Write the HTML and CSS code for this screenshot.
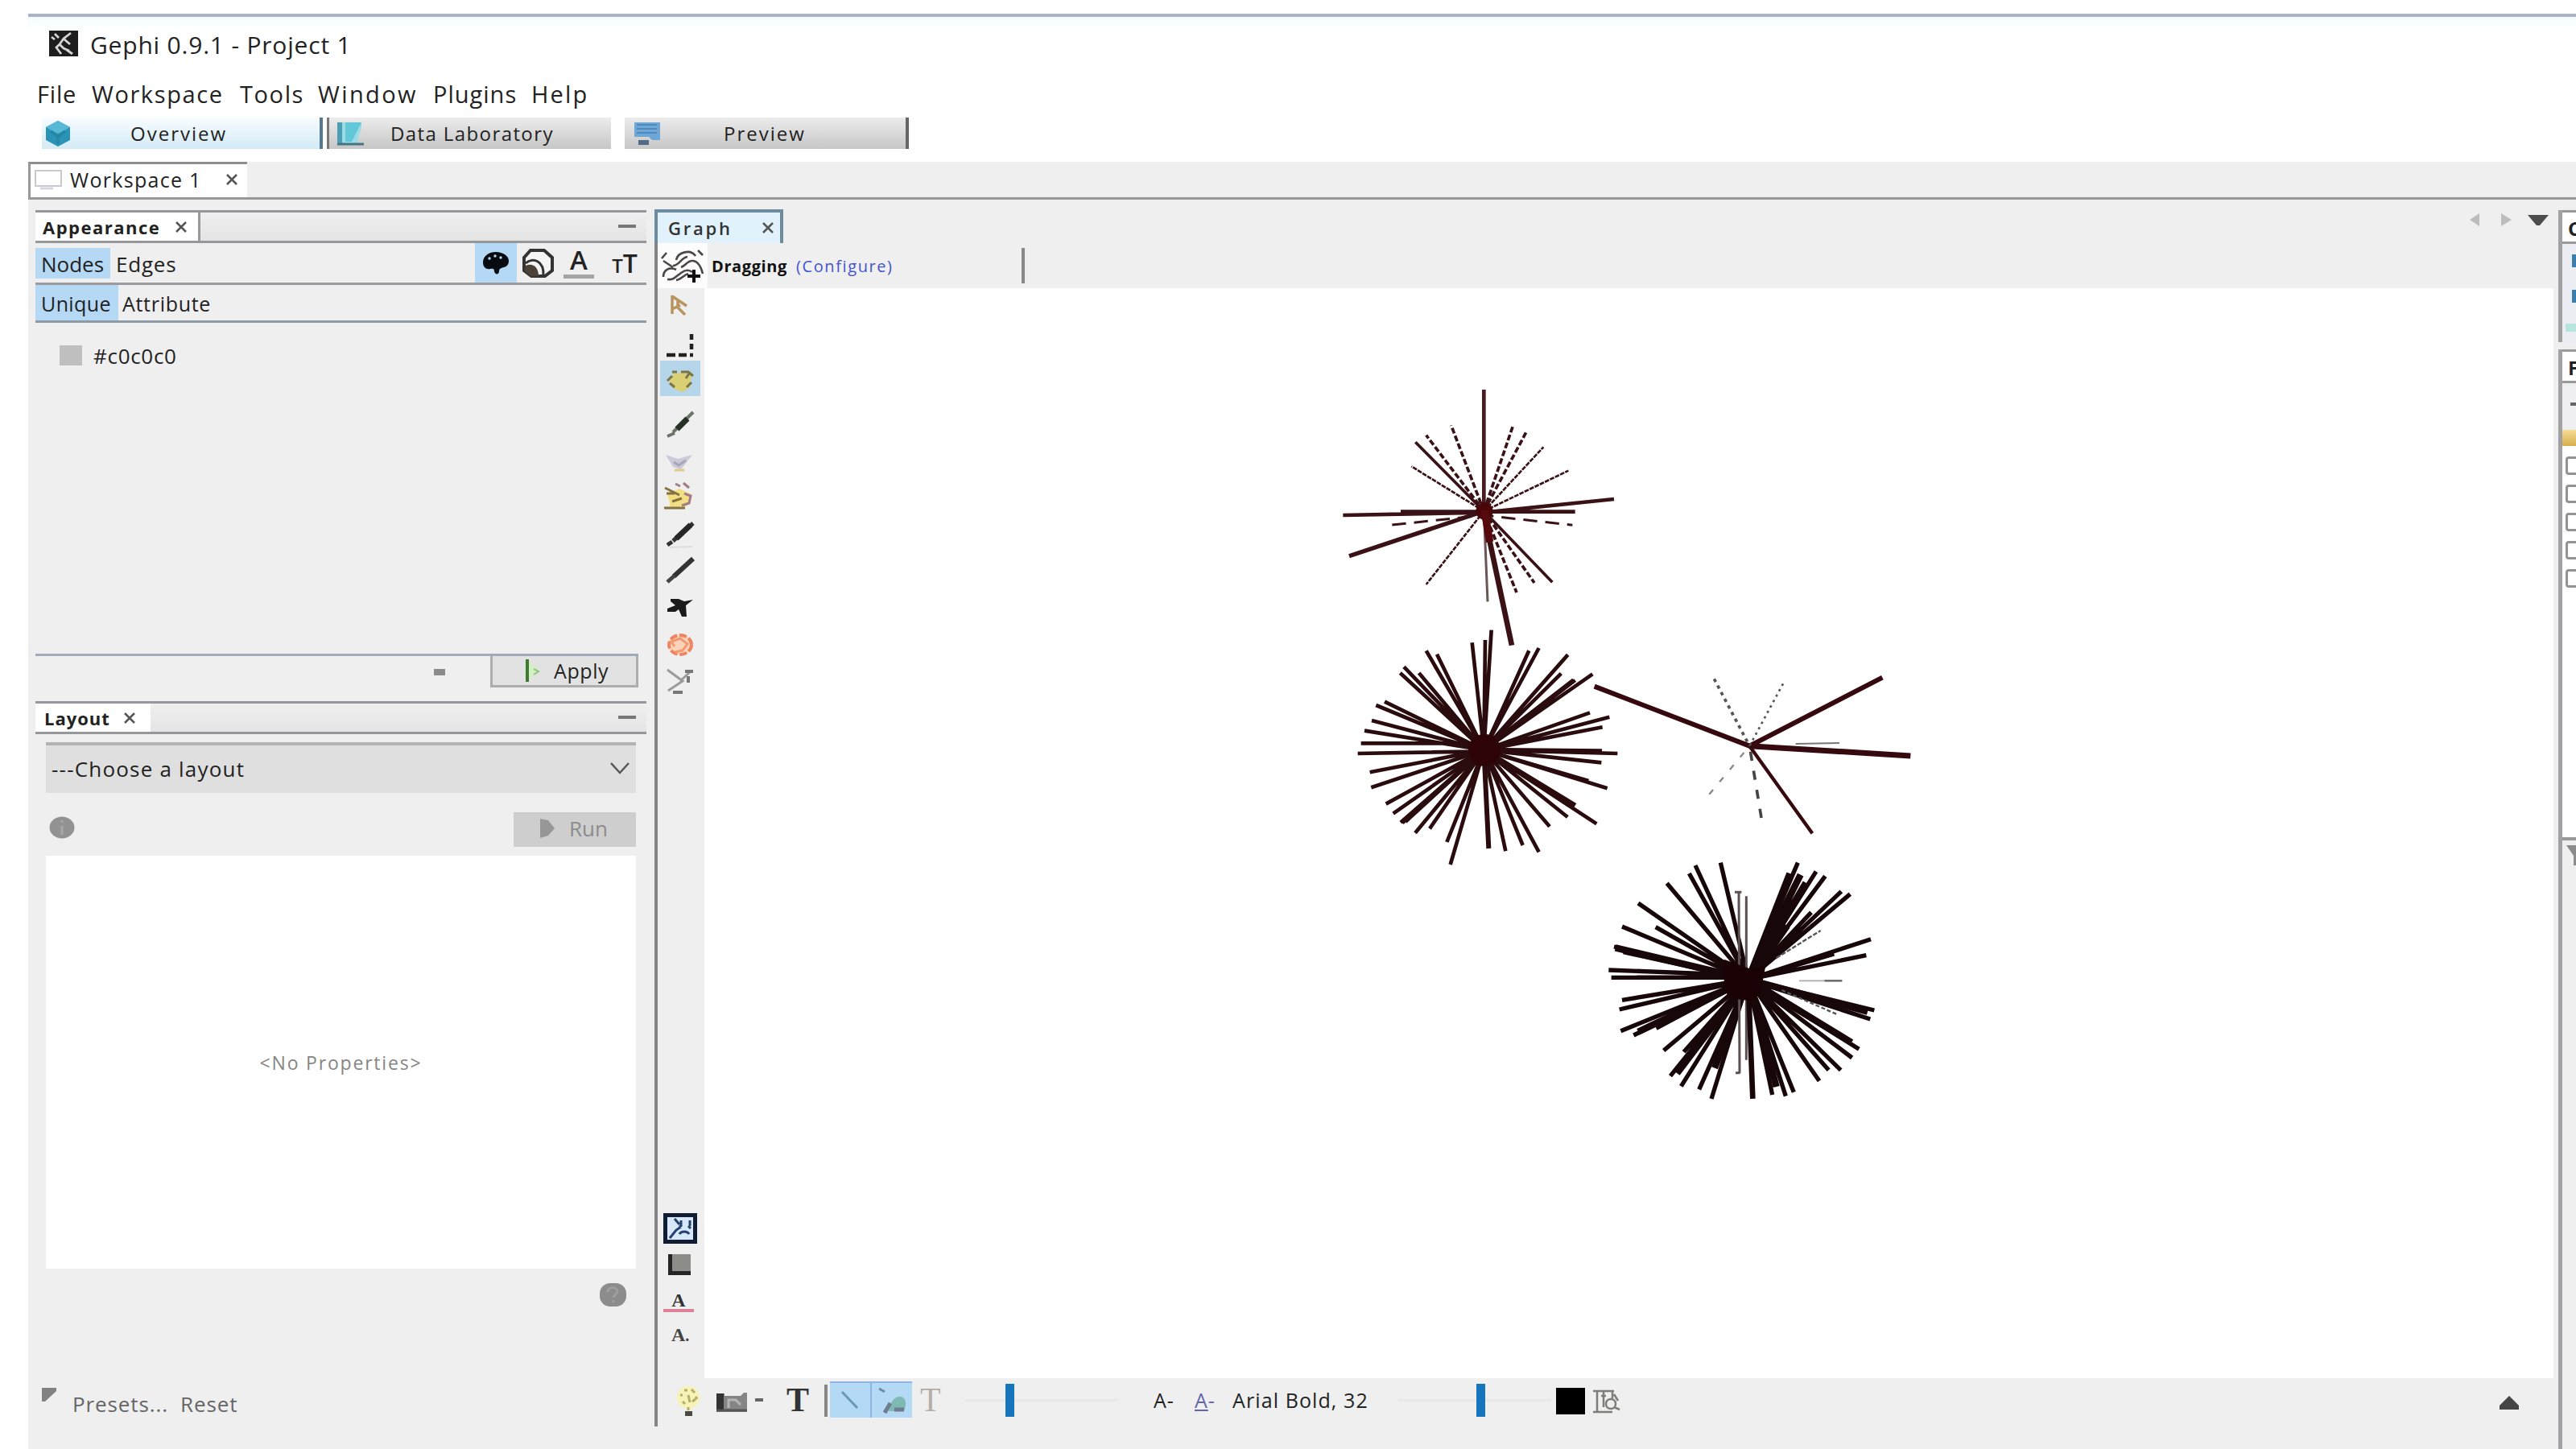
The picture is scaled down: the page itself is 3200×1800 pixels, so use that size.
FILE: index.html
```html
<!DOCTYPE html>
<html lang="en">
<head>
<meta charset="utf-8">
<title>Gephi 0.9.1 - Project 1</title>
<link rel="stylesheet" href="styles.css">
</head>
<body>
<div class="window">
  <header class="titlebar">
    <svg class="app-icon" width="36" height="32" viewBox="0 0 36 32"><rect width="36" height="32" fill="#1d1d1d"/><path d="M7 4l5 5M27 3l-9 7-5 7 5 5 7 3M19 11l7 6M13 17l-4 4 6 8M22 24l7 5M3 8l4 3" fill="none" stroke="#d6d6d6" stroke-width="2.800"/></svg>
    <span class="app-title">Gephi 0.9.1 - Project 1</span>
  </header>
  <nav class="menubar">
    <span class="m-file">File</span><span class="m-workspace">Workspace</span><span class="m-tools">Tools</span><span class="m-window">Window</span><span class="m-plugins">Plugins</span><span class="m-help">Help</span>
  </nav>
  <div class="perspectives">
    <div class="persp active">
      <svg width="36" height="34" viewBox="0 0 36 34"><path d="M18 1l15 8v16l-15 8-15-8V9z" fill="#2b93b5"/><path d="M18 1l15 8-15 8-15-8z" fill="#58b9d6"/><path d="M9 14l9 7 9-7M18 21v9" stroke="#2585a6" stroke-width="3" fill="none"/></svg>
      <span class="p-overview">Overview</span>
    </div>
    <div class="persp data">
      <svg width="36" height="32" viewBox="0 0 36 32"><path d="M2 2h30v6l-6 22H2z" fill="#9adbe4"/><path d="M2 2h6v28H2z" fill="#4a9fb4"/><path d="M12 2h20l-12 24h-8z" fill="#62c8d9"/><path d="M2 29h33" stroke="#447786" stroke-width="3"/></svg>
      <span class="p-data">Data Laboratory</span>
    </div>
    <div class="persp preview">
      <svg width="34" height="32" viewBox="0 0 34 32"><path d="M1 2h32v22H23l-4-4H1z" fill="#6ea6d6"/><path d="M4 5h25M4 10h25M4 15h25" stroke="#4f8abf" stroke-width="2"/><path d="M6 27h13" stroke="#536c83" stroke-width="6"/></svg>
      <span class="p-preview">Preview</span>
    </div>
  </div>
  <div class="workspace-bar">
    <div class="workspace-tab">
      <svg width="36" height="26" viewBox="0 0 36 26"><path d="M2 2h32v19H2z" fill="#fff" stroke="#c9c9d1" stroke-width="2"/><path d="M8 24h16" stroke="#d6d6e0" stroke-width="3"/></svg>
      <span class="ws-label">Workspace 1</span>
      <svg class="close" width="14" height="14" viewBox="0 0 14 14"><path d="M1 1l12 12M13 1L1 13"/></svg>
    </div>
  </div>

  <main class="main">
    <aside class="left">
      <div class="panel-head">
        <div class="panel-tab tab-appearance"><span>Appearance</span><svg class="close" width="14" height="14" viewBox="0 0 14 14"><path d="M1 1l12 12M13 1L1 13"/></svg></div>
        <i class="minimize"></i>
      </div>
      <div class="row nodes-row">
        <span class="choice c-nodes on">Nodes</span><span class="choice c-edges">Edges</span>
        <div class="looks">
          <span class="look on"><svg width="34" height="30" viewBox="0 0 34 30"><path d="M17 1C7 1 1 7 1 14c0 6 4 9 9 8 4-1 5 0 5 3 1 5 6 4 6 0 0-4 3-4 6-5 4-1 6-4 6-8C33 6 26 1 17 1z" fill="#080c10"/><g fill="#b9dcf5"><circle cx="9" cy="9" r="1.7"/><circle cx="16" cy="6" r="1.7"/><circle cx="23" cy="8" r="1.7"/></g></svg></span>
          <span class="look"><svg width="42" height="38" viewBox="0 0 42 38"><path d="M12 3h17l10 9v16l-9 7H13L4 28V12z" fill="#f4f4f4" stroke="#333" stroke-width="4"/><path d="M6 19c9-8 23-3 22 15" fill="none" stroke="#333" stroke-width="3"/><path d="M6 22c8-4 16 1 16 13H12L5 29z" fill="#4a4236"/></svg></span>
          <span class="look look-a">A</span>
          <span class="look look-t"><small>T</small>T</span>
        </div>
      </div>
      <div class="row unique-row"><span class="choice c-unique on">Unique</span><span class="choice c-attr">Attribute</span></div>
      <div class="appearance-body"><i class="swatch"></i><span>#c0c0c0</span></div>
      <div class="apply-row">
        <i class="dot"></i>
        <div class="btn apply"><svg width="20" height="28" viewBox="0 0 20 28"><path d="M3 2l15 12L3 26z" fill="#d4efc4"/><path d="M3 0v28" stroke="#3c7a2d" stroke-width="4"/><path d="M11 12l6 3-6 4" fill="none" stroke="#8fc67d" stroke-width="2"/></svg><span>Apply</span></div>
      </div>
      <div class="panel-head">
        <div class="panel-tab tab-layout"><span>Layout</span><svg class="close" width="14" height="14" viewBox="0 0 14 14"><path d="M1 1l12 12M13 1L1 13"/></svg></div>
        <i class="minimize"></i>
      </div>
      <div class="combo"><span>---Choose a layout</span><svg width="24" height="16" viewBox="0 0 24 16"><path d="M1 1l11 12L23 1" fill="none" stroke="#555" stroke-width="2.5"/></svg></div>
      <div class="run-row">
        <svg width="32" height="28" viewBox="0 0 32 28"><ellipse cx="16" cy="14" rx="15.500" ry="13.500" fill="#929292"/><path d="M16 5v3M16 12v11" stroke="#a8a8a8" stroke-width="3"/></svg>
        <div class="btn run"><svg width="20" height="26" viewBox="0 0 20 26"><path d="M1 1l10 2 8 10-8 9-10 3z" fill="#979797"/></svg><span>Run</span></div>
      </div>
      <div class="properties">&lt;No Properties&gt;</div>
      <div class="help-row"><svg width="33" height="29" viewBox="0 0 33 29"><rect width="33" height="29" rx="13" fill="#8c8c8c"/><path d="M10 11c0-7 12-7 12-1 0 4-5 4-5 8M17 21v3" fill="none" stroke="#9f9f9f" stroke-width="3"/></svg></div>
      <div class="presets"><svg width="18" height="17" viewBox="0 0 18 17"><path d="M0 0h18v4L4 17H0z" fill="#828282"/></svg><span class="pr-presets">Presets...</span><span class="pr-reset">Reset</span></div>
    </aside>

    <section class="graph">
      <div class="graph-head">
        <div class="graph-tab"><span>Graph</span><svg class="close" width="14" height="14" viewBox="0 0 14 14"><path d="M1 1l12 12M13 1L1 13"/></svg></div>
        <svg class="tab-nav" width="100" height="18" viewBox="0 0 100 18"><path d="M13 1v16L1 9zM40 1v16l13-8z" fill="#bdbdbd"/><path d="M73 3h26L88 16h-4z" fill="#4c4c4c"/></svg>
      </div>
      <div class="graph-opts">
        <div class="lasso"><svg width="56" height="44" viewBox="0 0 56 44"><path d="M2 13l6-7M4 16l12 8M20 15c2-10 18-14 24-5M16 22c8 0 10-10 18-11M26 24c6-2 8-9 15-8s10 8 12 16M4 36c0-9 8-13 16-9M9 39c8 1 10-3 17-8 5-4 10-4 14-1M20 40c6-1 9-6 15-8M47 3l6 6" fill="none" stroke="#4a4646" stroke-width="2.600"/><path d="M34 35h16M42 27v16" stroke="#111" stroke-width="4"/></svg></div>
        <b class="dragging">Dragging</b><span class="configure">(Configure)</span><i class="sep"></i>
      </div>
      <div class="graph-mid">
        <div class="tools">
          <svg class="t1" width="50" height="44" viewBox="0 0 50 44"><path d="M15 9v23M15 10l18 12M22 14v10l9 9M15 26l10-5" fill="none" stroke="#b8945f" stroke-width="3.500"/></svg>
          <svg class="t2" width="50" height="40" viewBox="0 0 50 40"><path d="M8 36h11M23 36h10M37 36h4M39 10v7M39 22v7" stroke="#222" stroke-width="4.500"/></svg>
          <svg class="t3" width="50" height="44" viewBox="0 0 50 44"><path d="M12 25l5-9 10-1 12 4-2 14-9 6-11-4z" fill="#d9cf74"/><path d="M9 25l6-6M15 14h6M26 14h9l6 5M12 28l6 5M33 33l6-6M36 16l-4 6" stroke="#7d7440" stroke-width="3" fill="none"/></svg>
          <svg class="t4" width="50" height="44" viewBox="0 0 50 44"><path d="M41 7L16 32M9 37l9-4" stroke="#6b7468" stroke-width="4"/><path d="M34 15L21 28" stroke="#283028" stroke-width="7"/></svg>
          <svg class="t5" width="50" height="44" viewBox="0 0 50 44"><path d="M7 12l15 5 18-5-14 18-10-3z" fill="#cccad8"/><path d="M17 21l6 4 9-6" stroke="#a7a5b8" stroke-width="3" fill="none"/><path d="M18 31h12" stroke="#dccb8a" stroke-width="3"/></svg>
          <svg class="t6" width="50" height="44" viewBox="0 0 50 44"><path d="M9 18l15-6 15 7-6 15-20 1z" fill="#f3df83"/><path d="M19 6l6 3M29 5l7 6M30 18l8 3-2 9-9 3" stroke="#a37d84" stroke-width="3" fill="none"/><path d="M6 11l18 9M8 18h10M5 36h26M15 28l12-4" stroke="#86713f" stroke-width="3" fill="none"/></svg>
          <svg class="t7" width="50" height="44" viewBox="0 0 50 44"><path d="M41 8L16 30M9 35l6-4" stroke="#333" stroke-width="5"/><path d="M38 10L20 27" stroke="#262626" stroke-width="7"/><path d="M12 38l28-1" stroke="#ddd" stroke-width="2"/></svg>
          <svg class="t8" width="50" height="44" viewBox="0 0 50 44"><path d="M41 7L17 29" stroke="#333" stroke-width="6"/><path d="M18 28L9 36" stroke="#444" stroke-width="5"/></svg>
          <svg class="t9" width="50" height="44" viewBox="0 0 50 44"><path d="M13 10h10l7 3 11-2-9 7 1 14h-6l-4-9-4 3H9v-4l10-4-6-5z" fill="#1b1b1b"/></svg>
          <svg class="t10" width="50" height="44" viewBox="0 0 50 44"><ellipse cx="25" cy="22" rx="15" ry="13" fill="#fbd3bb"/><ellipse cx="25" cy="22" rx="14" ry="12" fill="none" stroke="#ee8560" stroke-width="4" stroke-dasharray="9 3"/><path d="M18 24l-4-6 11-4 9 7-6 8-9 2" fill="none" stroke="#f09a72" stroke-width="3"/></svg>
          <svg class="t11" width="50" height="44" viewBox="0 0 50 44"><path d="M9 8l19 14-18 12M26 21l12-11" stroke="#9b9b9b" stroke-width="3" fill="none"/><path d="M31 10h10M35 16v8M16 36h12" stroke="#777" stroke-width="4" fill="none"/></svg>
          <div class="tools-bottom">
            <svg width="42" height="38" viewBox="0 0 42 38"><rect x="2.500" y="2.500" width="37" height="33" fill="#d8e8fb" stroke="#101c33" stroke-width="5"/><path d="M8 31l8-10 6-4M14 7l6 7M22 9v8M33 9v7M20 17l3-3M31 16l3 3M20 26c2-4 10-4 12 0" stroke="#23416f" stroke-width="3" fill="none"/></svg>
            <svg width="28" height="26" viewBox="0 0 28 26"><rect width="28" height="26" fill="#8d8d89"/><path d="M2.500 0v23.500H28" fill="none" stroke="#262626" stroke-width="5"/></svg>
            <span class="tool-a">A</span>
            <span class="tool-a2">A<small>.</small></span>
          </div>
        </div>
        <svg class="canvas" width="2297" height="1354" viewBox="0 0 2297 1354">
          <g transform="translate(765 102) scale(.33333)" stroke="#3a1216" fill="none">
            <path stroke="#4a1b20" stroke-width="14" d="M610 72V520"/>
            <path stroke-width="14" d="M85 540L610 530L1095 480M300 527L950 527"/>
            <path stroke-width="16" d="M108 692L610 525"/>
            <path stroke-width="20" d="M607 520L714 1025"/>
            <path stroke-width="8" stroke-dasharray="17 4" d="M610 525L832 286M610 525L925 374M610 525L340 358M610 525L395 798"/>
            <path stroke-width="9" stroke="#6b5557" d="M610 525L624 862"/>
            <path stroke-width="11" stroke-dasharray="22 9" d="M610 525L488 205M610 525L718 208M610 525L768 230M610 525L732 828M610 525L798 792M610 525L395 242"/>
            <path stroke-width="11" d="M610 525L355 268M610 525L865 790"/>
            <path stroke-width="9" stroke-dasharray="52 30" d="M268 576L610 540L940 577"/>
            <circle cx="612" cy="525" r="32" fill="#4a0508" stroke="none"/>
            <path stroke="#560a0d" stroke-width="28" d="M612 520L632 640"/>
          </g>
          <g transform="translate(765 402) scale(.33333)" stroke="#2a0c0e" fill="none" stroke-width="14">
            <path d="M610 515L638 68M610 515L615 105M610 515L566 115M610 515L395 145M610 515L435 158M610 515L312 205M610 515L298 228M610 515L368 228"/>
            <path d="M610 515L240 335M610 515L208 348M610 515L192 405M610 515L165 443M610 500L490 490L152 490M610 520L140 528M610 515L185 598M610 515L190 655"/>
            <path d="M610 515L245 716M610 515L272 752M610 515L300 785M610 515L318 782M610 515L354 824M610 515L408 808M610 515L472 858M610 515L485 942"/>
            <path stroke-width="18" d="M610 515L628 882M610 515L950 722M610 515L945 255M610 515L305 785M610 515L1050 520"/>
            <path d="M610 515L691 892M610 515L755 870M610 515L815 895M610 515L855 800M610 515L922 765M610 515L1030 790M610 515L1070 658M610 515L1000 630"/>
            <path d="M610 515L1048 562M610 515L1108 528M610 515L1052 430M610 515L1078 392M610 515L1005 376M610 515L1015 232M610 515L950 255M610 515L898 230M610 515L923 160M610 515L815 135M610 515L778 145"/>
            <circle cx="612" cy="515" r="60" fill="#2e0305" stroke="none"/>
          </g>
          <g transform="translate(1085 442) scale(.33333)" stroke="#35090d" fill="none">
            <path stroke-width="18" d="M62 158L640 380L1135 125"/>
            <path stroke-width="21" d="M640 380L1240 417"/>
            <path stroke-width="13" d="M640 380L874 706"/>
            <path stroke-width="11" stroke="#555" stroke-dasharray="13 15" d="M508 130L640 380"/>
            <path stroke-width="8" stroke="#555" stroke-dasharray="9 14" d="M765 148L640 380"/>
            <path stroke-width="11" stroke="#444" stroke-dasharray="34 38" d="M684 648L640 380"/>
            <path stroke-width="7" stroke="#888" stroke-dasharray="22 38" d="M490 560L640 380"/>
            <path stroke-width="6" stroke="#777" d="M812 372L975 369"/>
          </g>
          <g transform="translate(1085 682) scale(.33333)" stroke="#170708" fill="none" stroke-width="16">
            <path d="M635 530L532 95M635 530L438 105M635 530L415 135M635 530L332 172M635 530L225 246M635 530L165 333M635 530L290 335M635 530L135 408M635 530L170 428"/>
            <path d="M635 515L115 495M635 522L125 523M635 530L165 607M635 530L155 642M635 530L160 722M635 530L208 738M635 530L292 712M635 530L320 795"/>
            <path d="M635 530L345 890M635 530L385 928M635 530L395 800M635 530L452 940M635 530L498 975M635 530L540 770M635 530L725 960M635 530L775 965M635 530L805 950"/>
            <path stroke-width="25" d="M635 530L370 880M635 530L740 930M635 530L510 860M635 530L225 725M635 530L790 135M635 530L830 140M635 530L850 170M655 510L780 330M635 530L1020 765M635 530L1080 650M635 530L140 412"/>
            <path stroke-width="9" stroke="#5c5051" d="M628 220V830M600 200L603 880M585 205h25M588 878h16"/>
            <path stroke-width="20" d="M635 530L652 975"/>
            <path d="M635 530L900 908M635 530L980 868M635 530L935 868M635 530L1022 822M635 530L1048 790M635 530L1105 645M635 530L1090 678"/>
            <path d="M635 530L820 95M635 530L888 128M635 530L922 145M635 530L982 202M635 530L1015 212M635 530L870 280M635 530L1092 380M635 530L1075 440M635 530L955 435"/>
            <path stroke-width="7" stroke="#555" d="M740 450L905 348" stroke-dasharray="17 6"/>
            <path stroke-width="7" stroke="#555" stroke-dasharray="15 8" d="M760 570L970 662"/>
            <path stroke-width="5" stroke="#aaa" d="M825 535H985"/><path stroke-width="7" stroke="#666" d="M920 535h65"/>
            <path stroke="none" fill="#1a0204" d="M545 455L640 490L700 480L680 580L650 610L560 600L545 545z"/>
          </g>
        </svg>
      </div>
      <div class="graph-bottom">
        <svg class="b-bulb" width="30" height="40" viewBox="0 0 30 40"><ellipse cx="15" cy="15" rx="14" ry="14" fill="#f6f3b8"/><path d="M5 12h3M10 6h4M19 5l4 4M24 14l2 3M8 20l3 3M15 12l2 9M20 20l4-3M15 27v4" stroke="#b5ac66" stroke-width="3"/><path d="M11 35h9" stroke="#4a4a42" stroke-width="6"/></svg>
        <svg class="b-cam" width="38" height="28" viewBox="0 0 38 28"><path d="M0 5h10v3h20l4-4h4v24H0z" fill="#858585"/><path d="M0 5h9v20H0z" fill="#333"/><path d="M15 23V13h9l6 6" fill="none" stroke="#b5b5b5" stroke-width="3"/><path d="M0 26h38" stroke="#555" stroke-width="3"/></svg>
        <i class="dash"></i>
        <span class="big-t">T</span>
        <i class="sep"></i>
        <svg class="b-hl" width="102" height="45" viewBox="0 0 102 45"><rect width="102" height="45" fill="#b3d9f5"/><path d="M0 1h102M51 0v45" stroke="#8fb4e2" stroke-width="2"/><path d="M15 13l19 20" stroke="#6b98b6" stroke-width="3"/><path d="M61 9l7 4" stroke="#6a8ea6" stroke-width="3"/><path d="M73 37c2-12 7-18 14-18s9 8 5 18z" fill="#7fb9b3"/><path d="M68 39l7-12M80 35h12" stroke="#6e7c92" stroke-width="5"/></svg>
        <span class="out-t">T</span>
        <div class="slider s1"><i></i></div>
        <span class="font-a">A-</span>
        <span class="font-b"><u>A</u>-</span>
        <span class="font-name">Arial Bold, 32</span>
        <div class="slider s2"><i></i></div>
        <i class="black"></i>
        <svg class="b-set" width="38" height="32" viewBox="0 0 38 32"><path d="M2 4h26M7 4v25M12 10h6M2 30h24M15 4v20M26 5v8M18 20c0-8 12-8 12 0s-12 8-12 0M28 24l7 3M28 8l5 8" fill="none" stroke="#7e7e78" stroke-width="2.500"/></svg>
        <svg class="b-up" width="24" height="18" viewBox="0 0 24 18"><path d="M12 0l12 12v5H0v-5z" fill="#454545"/></svg>
      </div>
    </section>

    <aside class="right">
      <div class="side context"><div class="side-tab">C</div><i></i><i></i><i class="green"></i></div>
      <div class="side filters">
        <div class="side-tab">F</div>
        <div class="side-tool"></div>
        <div class="orange"></div>
        <div class="checks"><i></i><i></i><i></i><i></i><i></i></div>
        <div class="funnel"><svg width="14" height="28" viewBox="0 0 14 28"><path d="M0 0h14v25H9V13z" fill="#8b8b8b"/></svg></div>
      </div>
    </aside>
  </main>
</div>
</body>
</html>
```
FILE: styles.css
```css
* { box-sizing: border-box; }
body { margin: 0; background: #fff; font-family: "Open Sans", "Noto Sans", sans-serif; color: #222; }
i { display: block; font-style: normal; }
svg { display: block; flex: none; }
span, b { white-space: nowrap; }
.window { width: 3200px; height: 1800px; padding: 17px 0 0 35px; display: flex; flex-direction: column; overflow: hidden; }
.close { fill: none; stroke: #555; stroke-width: 2.5; }

.titlebar { height: 73px; border-top: 4px solid #a9b4c9; display: flex; align-items: center; padding: 0 0 0 26px; background: linear-gradient(#f4fbff, #fff 18px); }
.app-title { font-size: 30px; letter-spacing: .8px; margin-left: 15px; }
.app-icon { margin-top: -4px; }
.menubar { height: 54px; display: flex; align-items: center; padding: 0 0 2px 11px; font-size: 29px; letter-spacing: 1.6px; }
.m-file { width: 68px; letter-spacing: .8px; }
.m-workspace { width: 184px; }
.m-tools { width: 97px; }
.m-window { width: 143px; letter-spacing: 2.4px; }
.m-plugins { width: 122px; letter-spacing: 1px; }
.m-help { letter-spacing: 2.2px; }

.perspectives { height: 57px; display: flex; align-items: flex-start; padding: 2px 0 0 17px; font-size: 24px; }
.persp { height: 39px; display: flex; align-items: center; background: linear-gradient(#ececec, #c6c6c6); }
.persp.active { width: 349px; background: linear-gradient(#f8fdff, #d3eaf6); border-right: 4px solid #557990; padding-left: 2px; }
.persp.data { width: 353px; margin-left: 5px; border-left: 3px solid #777; padding-left: 8px; }
.persp.preview { width: 353px; margin-left: 17px; border-right: 4px solid #666; padding-left: 11px; }
.p-overview { margin-left: 72px; letter-spacing: 2px; }
.p-data { margin-left: 32px; letter-spacing: 1.4px; }
.p-preview { margin-left: 78px; letter-spacing: 2px; }

.workspace-bar { height: 47px; background: #efefef; border-bottom: 3px solid #989898; }
.workspace-tab { width: 272px; height: 44px; background: #fff; border-top: 3px solid #8e8e8e; border-left: 3px solid #999; display: flex; align-items: center; padding: 0 0 3px 4px; font-size: 25px; letter-spacing: 1.3px; }
.ws-label { width: 203px; padding-left: 9px; }

.main { flex: 1; display: flex; background: #efeff0; }
.left { width: 778px; padding: 13px 10px 0 9px; display: flex; flex-direction: column; }
.panel-head { height: 41px; border-top: 3px solid #96979a; border-bottom: 3px solid #96979a; display: flex; justify-content: space-between; align-items: center; background: linear-gradient(#efefef, #e4e4e4); padding-right: 13px; flex: none; }
.panel-tab { height: 35px; background: #fff; display: flex; align-items: center; font-weight: bold; font-size: 22px; }
.tab-appearance { width: 205px; border-right: 3px solid #999; padding-left: 9px; letter-spacing: 1.5px; }
.tab-appearance span { width: 165px; }
.tab-layout { width: 143px; padding-left: 11px; letter-spacing: 1px; }
.tab-layout span { width: 99px; }
.minimize { width: 22px; height: 4px; background: #777; margin-top: -2px; }
.row { display: flex; align-items: center; border-bottom: 3px solid #999b9f; font-size: 26px; flex: none; }
.nodes-row { height: 52px; }
.unique-row { height: 47px; border-color: #8d9ba6; font-size: 25px; }
.choice { display: flex; align-items: center; padding-left: 7px; }
.on { background: #b5d9f5; }
.c-nodes { width: 93px; height: 38px; padding-top: 2px; }
.c-edges { width: 100px; letter-spacing: .8px; padding-top: 2px; }
.c-unique { width: 103px; height: 44px; letter-spacing: .4px; padding-top: 2px; }
.c-attr { letter-spacing: .7px; padding: 2px 0 0 5px; }
.looks { display: flex; margin-left: auto; height: 49px; }
.look { width: 52px; display: flex; align-items: center; justify-content: center; }
.look + .look { width: 44px; margin-left: 4px; }
.look-a { font-weight: 600; font-size: 33px; line-height: 33px; height: 42px; border-bottom: 5px solid #a5a5a5; }
.look + .look-a { width: 38px; margin: 2px 7px 0 10px; }
.look-t { align-items: baseline; font-weight: 600; font-size: 32px; line-height: 49px; }
.look + .look-t { width: 54px; }
.look-t small { font-size: 24px; }
.appearance-body { height: 411px; flex: none; display: flex; align-items: flex-start; padding: 24px 0 0 30px; font-size: 26px; letter-spacing: .7px; }
.swatch { width: 28px; height: 25px; background: #bfbfbf; margin: 4px 14px 0 0; }
.appearance-body span { margin-top: -1px; }
.apply-row { height: 59px; flex: none; margin-right: 10px; border-top: 3px solid #a0aab8; display: flex; justify-content: flex-end; align-items: flex-start; }
.dot { width: 14px; height: 8px; background: #8b8b8b; margin: 16px 56px 0 0; }
.btn { display: flex; align-items: center; }
.apply { width: 184px; height: 39px; border: 3px solid #adadad; border-top: 0; background: #e2e2e2; padding-left: 40px; font-size: 25px; letter-spacing: .6px; }
.apply span { margin-left: 16px; }
.combo { height: 63px; flex: none; margin: 10px 13px 0; border-top: 4px solid #b3b3b3; background: #dfdfe0; display: flex; align-items: center; justify-content: space-between; padding: 0 8px 2px 7px; font-size: 26px; letter-spacing: 1.2px; }
.run-row { display: flex; flex: none; align-items: center; justify-content: space-between; margin: 24px 13px 0 17px; }
.run-row > svg { margin-top: -6px; }
.run { width: 152px; height: 43px; background: #cecece; padding: 0 0 3px 32px; font-size: 26px; color: #8c8c8c; }
.run span { margin-left: 17px; }
.properties { height: 513px; flex: none; background: #fff; margin: 11px 13px 0; display: flex; align-items: center; justify-content: center; font-size: 23px; letter-spacing: 1.8px; color: #858585; }
.help-row { display: flex; flex: none; justify-content: flex-end; padding: 18px 25px 0 0; }
.presets { margin: 103px 0 0 8px; display: flex; align-items: center; font-size: 26px; color: #666; letter-spacing: .9px; }
.presets svg { margin-top: -24px; }
.pr-presets { width: 134px; margin-left: 20px; }

.graph { width: 2362px; flex: none; padding-top: 12px; display: flex; flex-direction: column; }
.graph-head { height: 42px; display: flex; justify-content: space-between; align-items: flex-start; }
.graph-tab { width: 160px; height: 42px; border: 4px solid #6d8c9f; border-bottom: 0; background: #e1f2fd; display: flex; align-items: center; padding-left: 13px; font-weight: 600; font-size: 22px; letter-spacing: 2.8px; color: #333; }
.graph-tab span { width: 117px; }
.tab-nav { margin: 4px 8px 0 0; }
.graph-opts { height: 56px; border-left: 4px solid #858585; display: flex; align-items: center; }
.lasso { width: 62px; height: 56px; background: #fcfcfc; display: flex; align-items: center; justify-content: center; }
.dragging { font-size: 20px; letter-spacing: .6px; color: #111; width: 105px; margin-left: 5px; }
.configure { font-size: 20px; letter-spacing: 1.6px; color: #4454cc; width: 280px; }
.sep { width: 4px; height: 44px; background: #888; }
.graph-mid { height: 1354px; display: flex; border-left: 4px solid #858585; background: #efefef; }
.tools { width: 58px; padding-left: 3px; display: flex; flex-direction: column; }
.t2 { margin-top: 3px; }
.t3 { background: #b4d5ea; margin-top: 3px; }
.t4 { margin-top: 13px; }
.t5 { margin-top: 4px; }
.t6 { margin-top: -2px; }
.t7 { margin-top: 3px; }
.t8 { margin-top: 1px; }
.t9 { margin-top: 3px; }
.t10 { margin-top: 1px; }
.t11 { margin-top: 1px; }
.tools-bottom { margin-top: auto; height: 205px; padding-left: 4px; display: flex; flex-direction: column; align-items: flex-start; }
.tools-bottom svg + svg { margin: 13px 0 0 6px; }
.tool-a { width: 38px; height: 26px; margin-top: 20px; border-bottom: 4px solid #dd8098; text-align: center; font: bold 24px/22px "Liberation Serif", serif; color: #333; }
.tool-a2 { margin: 17px 0 0 10px; font: bold 24px/22px "Liberation Serif", serif; color: #444; }
.canvas { background: #fff; }
.graph-bottom { height: 88px; display: flex; align-items: flex-start; padding-left: 25px; position: relative; }
.graph-bottom::before { content: ""; position: absolute; left: 0; top: 0; width: 4px; height: 60px; background: #858585; }
.graph-bottom > * { flex: none; }
.b-bulb { margin: 9px 20px 0 2px; }
.b-cam { margin-top: 14px; }
.dash { width: 10px; height: 4px; margin: 25px 29px 0 10px; background: #666; }
.big-t { width: 47px; font: bold 42px/54px "Liberation Serif", serif; color: #333; }
.graph-bottom .sep { height: 40px; margin-top: 8px; }
.b-hl { margin: 4px 10px 0 3px; }
.out-t { width: 56px; font: 42px/54px "Liberation Serif", serif; color: #b3aea8; }
.slider { height: 54px; display: flex; align-items: center; background: linear-gradient(#e8e8e8, #e8e8e8) center / 100% 3px no-repeat; }
.slider i { width: 11px; height: 41px; background: #1676bd; }
.s1 { width: 190px; padding-left: 50px; }
.s2 { width: 190px; padding-left: 97px; margin-right: 6px; }
.font-a { width: 51px; margin-left: 44px; font-size: 25px; line-height: 54px; letter-spacing: 1px; }
.font-b { width: 47px; font-size: 25px; line-height: 54px; color: #6265a8; letter-spacing: 1px; }
.font-name { width: 206px; font-size: 25px; line-height: 54px; letter-spacing: 1.1px; }
.black { width: 36px; height: 33px; background: #000; margin: 12px 8px 0 0; }
.b-set { margin-top: 12px; }
.graph-bottom .b-up { margin: 22px 46px 0 auto; }

.right { width: 25px; flex: none; padding: 13px 0 0 3px; }
.side { border-left: 5px solid #a1a1a3; }
.context { height: 164px; background: #ececf3; margin-bottom: 9px; }
.side-tab { height: 42px; background: #fff; border-top: 3px solid #999; border-bottom: 3px solid #999; font-weight: bold; font-size: 24px; line-height: 39px; padding-left: 7px; overflow: hidden; }
.context i { height: 16px; margin: 13px 0 28px 12px; background: #3d7fac; }
.context i + i { margin: 0 0 26px 12px; }
.context .green { height: 10px; background: #b7e4dc; margin-left: 4px; }
.filters { height: 1366px; background: #efefef; }
.side-tool { height: 58px; background: linear-gradient(#666, #666) right 24px / 7px 4px no-repeat #efeff2; }
.orange { height: 20px; background: linear-gradient(#f5dc96, #d6ad4c); }
.checks { height: 486px; background: #fff; padding: 13px 0 0 4px; }
.checks i { height: 23px; width: 26px; border: 3px solid #939393; border-radius: 4px; margin-bottom: 12px; }
.funnel { border-top: 4px solid #999; padding: 6px 0 0 5px; }
```
